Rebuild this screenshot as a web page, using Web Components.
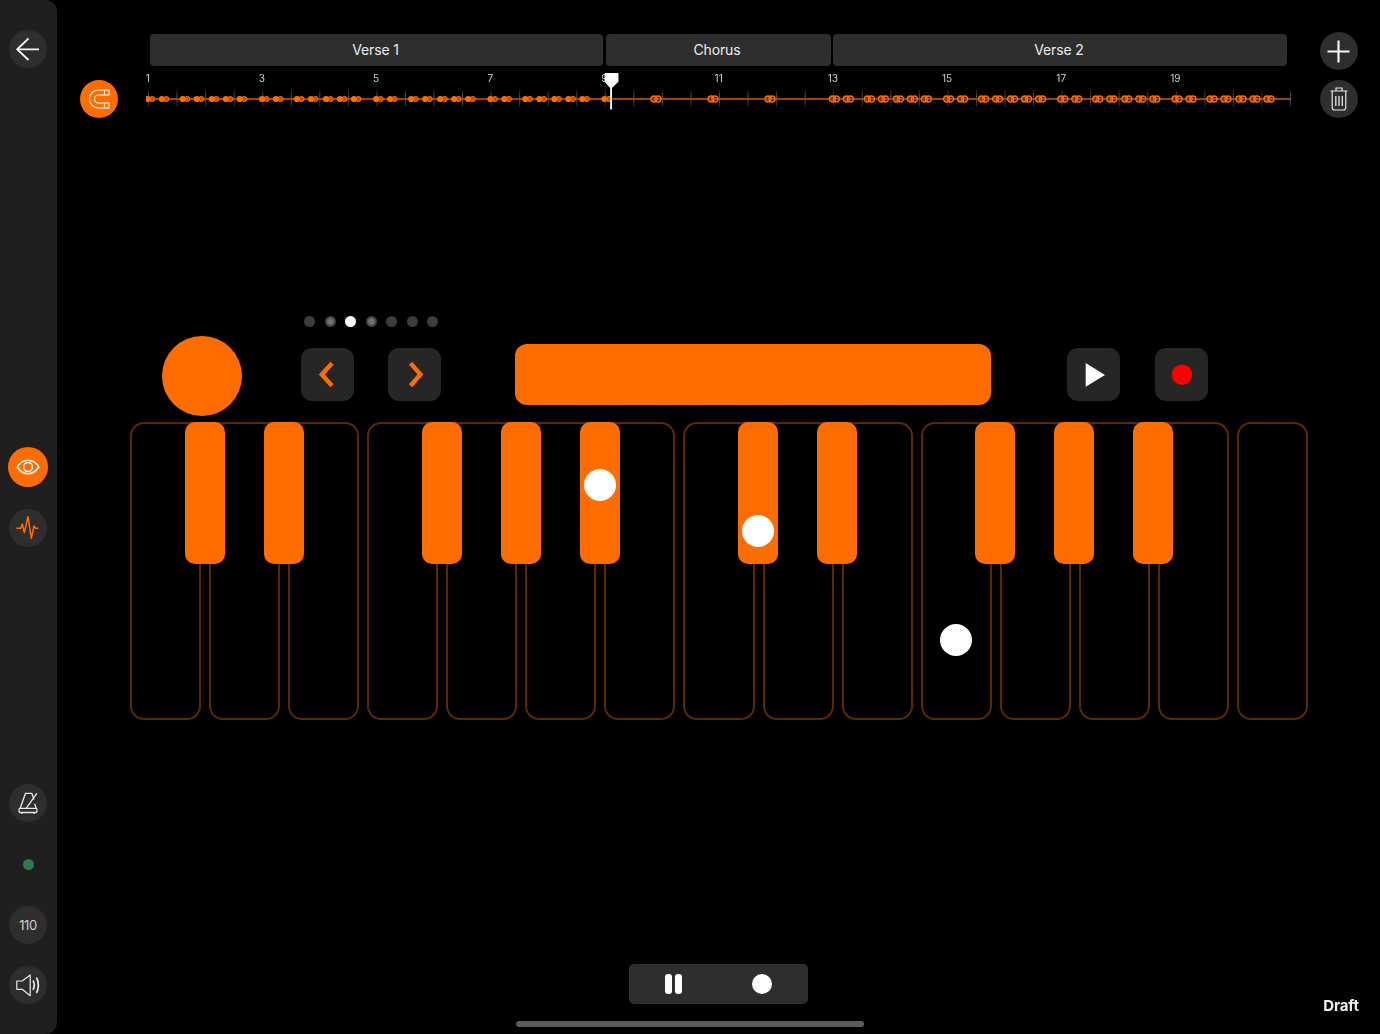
<!DOCTYPE html>
<html lang="en">
<head>
<meta charset="utf-8">
<title>Piano pattern editor</title>
<style>
  html, body { margin: 0; height: 100%; background: #000; }
  body { font-family: Inter, "Liberation Sans", sans-serif; color: #fff; overflow: hidden; }
</style>
</head>
<body>
<editor-app></editor-app>
<script>
const ORANGE = '#ff6d00';
function def(name, css, html, extra) {
  customElements.define(name, class extends HTMLElement {
    constructor() {
      super();
      this.attachShadow({ mode: 'open' }).innerHTML = `<style>${css}</style>${typeof html === 'function' ? html(this) : html}`;
    }
    connectedCallback() { if (extra) extra(this); }
  });
}

def('round-btn', `
  :host { display: flex; align-items: center; justify-content: center; box-sizing: border-box; flex: none;
    width: var(--size, 38px); height: var(--size, 38px); border-radius: 50%; background: var(--bg, #2e2e2e);
    color: #cfcfcf; font-size: 13px; letter-spacing: -.4px; }
  ::slotted(svg) { display: block; }
`, `<slot></slot>`);

def('square-btn', `
  :host { display: flex; align-items: center; justify-content: center; flex: none; width: 53px; height: 53px;
    border-radius: 11px; background: #262626; margin-top: 12px; }
  ::slotted(svg) { display: block; }
`, `<slot></slot>`);

def('side-bar', `
  :host { display: flex; flex-direction: column; align-items: center; flex: none; box-sizing: border-box;
    width: 57px; height: 1034px; padding: 30px 1px 0 0; background: #1f1f1f; border-radius: 0 12px 12px 0; }
`, `<slot></slot>`);

def('song-segment', `
  :host { display: flex; align-items: center; justify-content: center; box-sizing: border-box; height: 32px; padding: 0 2px 2px 0; border-radius: 4px;
    background: #2e2e2e; color: #ececec; font-size: 14px; letter-spacing: -.15px; flex: none; }
`, `<slot></slot>`);

def('song-sections', `
  :host { display: flex; gap: 2.5px; padding: 2px 0 0 4px; align-self: start; }
`, `<slot></slot>`);

const PITCH = 114.2;
const VERSE = [2, 16, 37, 51, 66, 80, 94];
function pair(x, filled) {
  const y = 29;
  if (filled) {
    return `<circle cx="${x + 2.3}" cy="${y}" r="2.6" fill="#b84f00" stroke="${ORANGE}" stroke-width="1"/>
            <circle cx="${x - 2.2}" cy="${y}" r="3.1" fill="${ORANGE}"/>`;
  }
  return `<circle cx="${x - 2}" cy="${y}" r="3" fill="#7a3500" stroke="${ORANGE}" stroke-width="1.3"/>
          <circle cx="${x + 2}" cy="${y}" r="3" fill="none" stroke="${ORANGE}" stroke-width="1.3"/>`;
}
function timelineSvg() {
  let s = '';
  for (let i = 0; i <= 40; i++) {
    const x = 2.5 + i * 28.55;
    s += `<line x1="${x}" x2="${x}" y1="20" y2="37" stroke="url(#tick)" stroke-width="1"/>`;
  }
  s += `<rect x="1" y="28" width="1143" height="2" fill="#9c4500"/>`;
  for (let k = 0; k < 4; k++) for (const o of VERSE) s += pair(2 + k * PITCH + o, true);
  s += pair(460.7, true);
  for (const x of [510, 567, 624]) s += pair(x, false);
  for (let k = 0; k < 4; k++) for (const o of VERSE) s += pair(686.4 + k * PITCH + o, false);
  return `<svg width="1146" height="48" viewBox="0 0 1146 48" style="display:block;position:absolute;left:0;top:0">
    <defs><linearGradient id="tick" gradientUnits="userSpaceOnUse" x1="0" x2="0" y1="20" y2="37"><stop offset="0" stop-color="#1c1c1c"/><stop offset=".5" stop-color="#626262"/><stop offset="1" stop-color="#1c1c1c"/></linearGradient></defs>${s}</svg>`;
}
def('time-line', `
  :host { display: block; position: relative; height: 48px; margin-top: -10px; width: 1146px; }
  .labels { display: grid; grid-template-columns: repeat(10, 114.2px); margin-left: -55.4px; font-size: 10px; line-height: 17px; color: #d0d0d0; text-align: center; will-change: opacity; }
  .head { position: absolute; left: 458px; top: 2.5px; }
`, () => `<div class="labels">${[1,3,5,7,9,11,13,15,17,19].map(n => `<span>${n}</span>`).join('')}</div>
  ${timelineSvg()}
  <svg class="head" width="15" height="37" viewBox="0 0 15 37"><path d="M1.5 0H13.5a1 1 0 0 1 1 1V8.5L8 15V36.5H6.2V15L.5 8.5V1a1 1 0 0 1 1-1Z" fill="#fff"/></svg>`);

def('top-area', `
  :host { display: grid; grid-template-columns: 38px 1146px 38px; grid-template-rows: 38px 38px; column-gap: 28px; row-gap: 10px;
    padding: 32px 0 0 23px; justify-content: start; }
`, `<slot></slot>`);

def('page-dots', `
  :host { display: flex; gap: 9.5px; margin: 198px 0 0 247px; height: 11px; }
  i { width: 11px; height: 11px; border-radius: 50%; background: #3c3c3c; display: block; }
  i.half { background: radial-gradient(circle, #707070 0 2.5px, #3f3f3f 4.5px); }
  i.on { background: #fff; }
`, `<i></i><i class="half"></i><i class="on"></i><i class="half"></i><i></i><i></i><i></i>`);

def('control-row', `
  :host { display: flex; align-items: flex-start; height: 80px; margin: 9px 0 0 105px; }
  .big { width: 80px; height: 80px; border-radius: 50%; background: ${ORANGE}; flex: none; }
  .bar { width: 476px; height: 61px; border-radius: 12px; background: ${ORANGE}; flex: none; margin: 8px 76px 0 74px; }
  .gap1 { width: 59px; } .gap2 { width: 34px; } .gap3 { width: 35px; }
  svg { display: block; }
`, `<div class="big"></div><div class="gap1"></div>
  <square-btn><svg width="53" height="53" viewBox="0 0 53 53"><path d="M31 15.2 20.8 26.4 31 37.8" fill="none" stroke="${ORANGE}" stroke-width="4.4"/></svg></square-btn>
  <div class="gap2"></div>
  <square-btn><svg width="53" height="53" viewBox="0 0 53 53"><path d="M22.6 15.2 32.4 26.4 22.6 37.8" fill="none" stroke="${ORANGE}" stroke-width="4.4"/></svg></square-btn>
  <div class="bar"></div>
  <square-btn><svg width="53" height="53" viewBox="0 0 53 53"><path d="M18.7 15 38 27 18.7 38.7Z" fill="#fff"/></svg></square-btn>
  <div class="gap3"></div>
  <square-btn><svg width="53" height="53" viewBox="0 0 53 53"><circle cx="27" cy="26.7" r="10.2" fill="#ff0000"/></svg></square-btn>`);

def('black-key', `
  :host { display: block; position: absolute; top: 0; width: 40px; height: 142px; border-radius: 10px; background: ${ORANGE}; }
`, ``);

def('note-dot', `
  :host { display: block; position: absolute; width: 32px; height: 32px; border-radius: 50%; background: #fff; z-index: 2; }
`, ``);

def('key-group', `
  :host { display: flex; flex-direction: column; position: relative; box-sizing: border-box; height: 298px; min-width: 0; }
  .top { box-sizing: border-box; height: 142px; border: 2px solid #5e2900; border-bottom: 0; border-radius: 14px 14px 0 0; flex: none; }
  .low { display: grid; grid-auto-flow: column; grid-auto-columns: 1fr; column-gap: 8px; flex: 1; }
  .low i { display: block; box-sizing: border-box; border: 2px solid #5e2900; border-top: 0; border-radius: 0 0 14px 14px; }
`, el => `<div class="top"></div><div class="low">${'<i></i>'.repeat(+el.getAttribute('keys'))}</div><slot></slot>`);

def('piano-board', `
  :host { display: grid; grid-template-columns: repeat(15, 1fr); column-gap: 8px; width: 1178px; margin: 6px 0 0 73px; }
  ::slotted([keys="3"]) { grid-column: span 3; }
  ::slotted([keys="4"]) { grid-column: span 4; }
  ::slotted([keys="1"]) { grid-column: span 1; }
`, `<slot></slot>`);

def('transport-bar', `
  :host { display: flex; align-items: center; box-sizing: border-box; width: 178.5px; height: 40px; border-radius: 5px; background: #2e2e2e; padding-left: 36px; justify-self: center; }
  .bars { display: flex; gap: 3.4px; }
  .bars i { display: block; width: 6.6px; height: 20px; border-radius: 3px; background: #fff; }
  .dot { width: 20px; height: 20px; border-radius: 50%; background: #fff; margin-left: 70.5px; }
`, `<div class="bars"><i></i><i></i></div><div class="dot"></div>`);

def('foot-row', `
  :host { display: grid; grid-template-columns: 1fr auto 1fr; align-items: end; height: 40px; margin-top: 244px; }
  .draft { grid-column: 3; justify-self: end; margin: 0 21px -10px 0; font-size: 15px; line-height: 17px; font-weight: 700; letter-spacing: -.1px; color: #f0f0f0; will-change: opacity; }
`, `<span></span><transport-bar></transport-bar><span class="draft">Draft</span>`);

def('home-bar', `
  :host { display: block; position: absolute; left: 516px; bottom: 7px; width: 348px; height: 6px; border-radius: 3px; background: #5c5c5c; }
`, ``);

const ICON = {
  back: `<svg width="38" height="38" viewBox="0 0 38 38" fill="none" stroke="#f8f8f8" stroke-width="1.8"><path d="M8 19.3H30M19.5 8.5 8.2 19.3 19.5 30"/></svg>`,
  magnet: `<svg width="38" height="38" viewBox="0 0 38 38" fill="none" stroke="#fff" stroke-width="1.1"><path d="M29 10H18.5a9 9 0 0 0 0 18H29V23H18.5a4 4 0 0 1 0-8H29ZM24.5 10V15M24.5 23V28"/></svg>`,
  plus: `<svg width="38" height="38" viewBox="0 0 38 38" fill="none" stroke="#f4f4f4" stroke-width="2.2"><path d="M7.5 19.5H29.5M18.5 8.5V30.5"/></svg>`,
  trash: `<svg width="38" height="38" viewBox="0 0 38 38" fill="none" stroke="#e4e4e4" stroke-width="1.2"><path d="M10.5 11H27.5M16 10.8V8H22V10.8M12.2 11V27.5a2.5 2.5 0 0 0 2.5 2.5H23.3a2.5 2.5 0 0 0 2.5-2.5V11"/><path d="M15.8 16V26M19 16V26M22.3 16V26" stroke-width="1.3"/></svg>`,
  eye: `<svg width="40" height="40" viewBox="0 0 40 40" fill="none" stroke="#fff" stroke-width="1.5"><path d="M9.2 20C12 15.6 15.8 13.2 20 13.2S28 15.6 30.8 20C28 24.4 24.2 26.8 20 26.8S12 24.4 9.2 20Z"/><circle cx="20" cy="20" r="4.4"/></svg>`,
  wave: `<svg width="38" height="38" viewBox="0 0 38 38" fill="none" stroke="${ORANGE}" stroke-width="1.5" stroke-linejoin="round"><path d="M7.3 19.3H11.7L13.3 15 15.3 23.7 19 7.7 22.3 29.3 25 17 26.7 19.3H29.3"/></svg>`,
  metro: `<svg width="38" height="38" viewBox="0 0 38 38" fill="none" stroke="#e8e8e8" stroke-width="1.3" stroke-linejoin="round"><path d="M11.2 24.3 16.5 9.3H22.8L25 15.5M25.6 19.8 27.2 24.3M17.2 24.3 27.8 9.3"/><rect x="10" y="24.3" width="18" height="4.2" rx="1.2"/><path d="M13 28.5V30M25 28.5V30"/></svg>`,
  speaker: `<svg width="38" height="38" viewBox="0 0 38 38" fill="none" stroke="#e8e8e8" stroke-width="1.2" stroke-linejoin="round"><path d="M7.8 15H13.2L21.2 9V29.7L13.2 23.3H7.8Z"/><path d="M24 14.5C25.6 17.2 25.6 20.8 24 23.8" stroke-width="1.7"/><path d="M27.4 11.5C30 16 30 22.5 27.4 27" stroke-width="1.7"/></svg>`
};

def('editor-app', `
  :host { display: flex; position: relative; width: 1380px; height: 1034px; background: #000; }
  main { flex: 1; min-width: 0; display: flex; flex-direction: column; }
  .m1 { margin-top: 379px; } .m2 { margin-top: 22px; } .m3 { margin-top: 237px; } .m4 { margin-top: 36px; } .m5 { margin-top: 22px; }
  .led { width: 11px; height: 11px; border-radius: 50%; background: #2e7a4d; margin-top: 37px; flex: none; }
  .mag { --bg: ${ORANGE}; grid-column: 1; grid-row: 2; }
  .sec { grid-column: 2; grid-row: 1; }
  .tl { grid-column: 2; grid-row: 2; }
  .add { grid-column: 3; grid-row: 1; }
  .del { grid-column: 3; grid-row: 2; }
`, `
  <side-bar>
    <round-btn>${ICON.back}</round-btn>
    <round-btn class="m1" style="--size:40px;--bg:${ORANGE}">${ICON.eye}</round-btn>
    <round-btn class="m2">${ICON.wave}</round-btn>
    <round-btn class="m3">${ICON.metro}</round-btn>
    <div class="led"></div>
    <round-btn class="m4">110</round-btn>
    <round-btn class="m5">${ICON.speaker}</round-btn>
  </side-bar>
  <main>
    <top-area>
      <song-sections class="sec">
        <song-segment style="width:453px">Verse 1</song-segment>
        <song-segment style="width:225px">Chorus</song-segment>
        <song-segment style="width:454px">Verse 2</song-segment>
      </song-sections>
      <round-btn class="add">${ICON.plus}</round-btn>
      <round-btn class="mag">${ICON.magnet}</round-btn>
      <time-line class="tl"></time-line>
      <round-btn class="del">${ICON.trash}</round-btn>
    </top-area>
    <page-dots></page-dots>
    <control-row></control-row>
    <piano-board>
      <key-group keys="3"><black-key style="left:55px"></black-key><black-key style="left:134px"></black-key></key-group>
      <key-group keys="4"><black-key style="left:55px"></black-key><black-key style="left:134px"></black-key><black-key style="left:213px"></black-key><note-dot style="left:217px;top:47px"></note-dot></key-group>
      <key-group keys="3"><black-key style="left:55px"></black-key><black-key style="left:134px"></black-key><note-dot style="left:59px;top:93px"></note-dot></key-group>
      <key-group keys="4"><black-key style="left:54.5px"></black-key><black-key style="left:133.5px"></black-key><black-key style="left:212.5px"></black-key><note-dot style="left:19.5px;top:202px"></note-dot></key-group>
      <key-group keys="1"></key-group>
    </piano-board>
    <foot-row></foot-row>
  </main>
  <home-bar></home-bar>
`);
</script>
</body>
</html>
